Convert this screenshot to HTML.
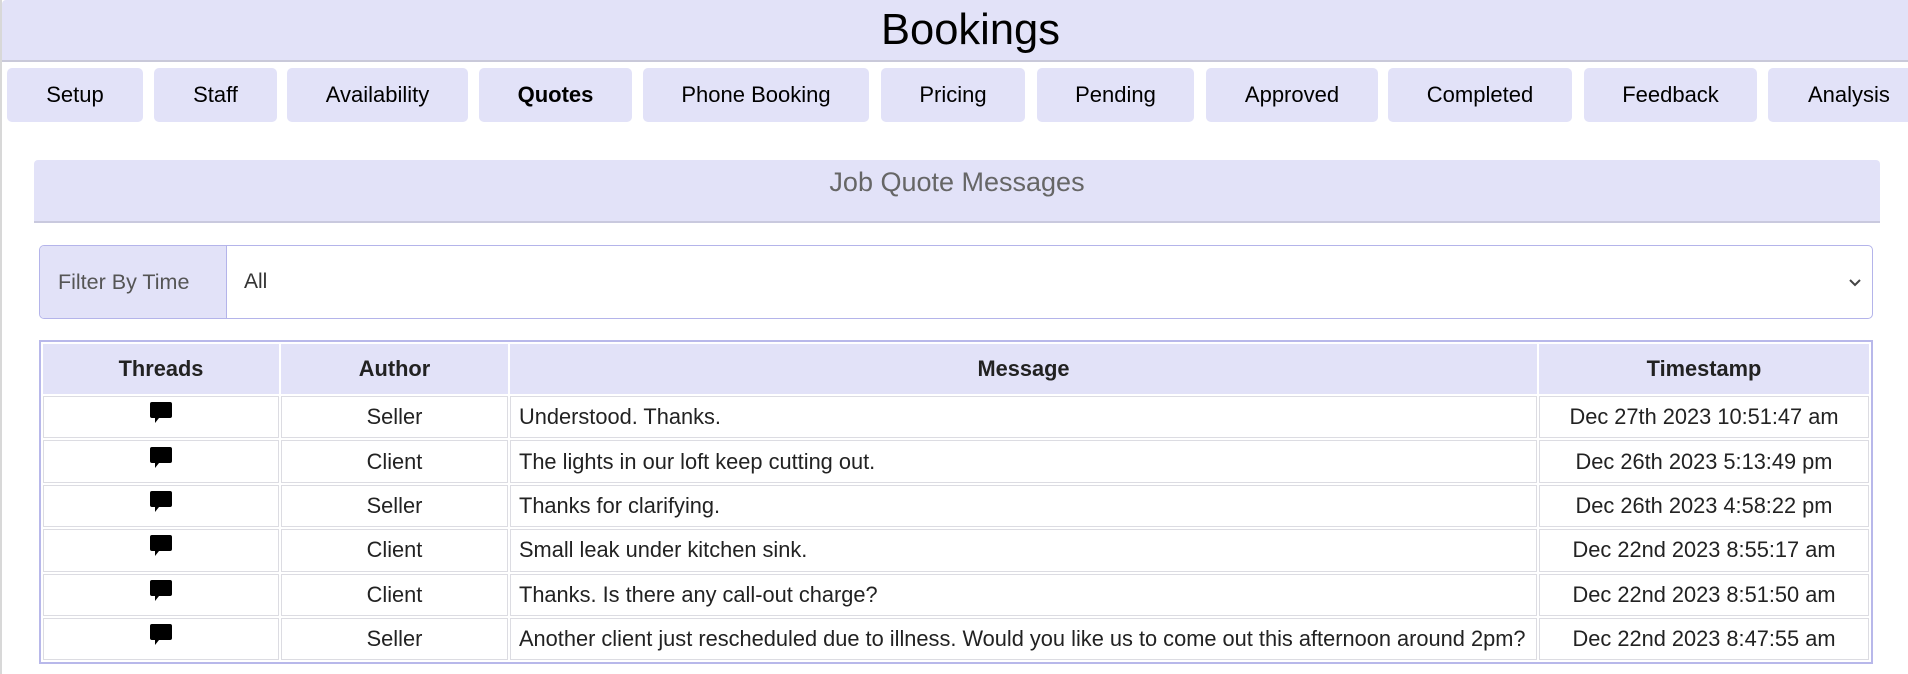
<!DOCTYPE html>
<html><head><meta charset="utf-8"><style>
*{box-sizing:border-box;margin:0;padding:0}
body{width:1908px;height:674px;overflow:hidden;background:#fff;font-family:"Liberation Sans",Arial,sans-serif;position:relative;color:#000}
.frame{position:absolute;left:0;top:0;width:2px;height:674px;background:#d8d8d8}
.hdr{position:absolute;left:2px;top:0;width:1906px;height:62px;background:#e2e2f8;border-bottom:2px solid #c9c9d9;border-top-left-radius:4px}
.hdr span{position:absolute;left:879px;top:4px;font-size:43.5px;line-height:52px;white-space:nowrap}
.tab{position:absolute;top:68px;height:54px;background:#e2e2f8;border-radius:5px;font-size:22px;line-height:54px;text-align:center;white-space:nowrap}
.title{position:absolute;left:34px;top:160px;width:1846px;height:63px;background:#e2e2f8;border-bottom:2px solid #c9c9de;border-radius:4px 4px 0 0;text-align:center;font-size:27px;line-height:44px;color:#666}
.flt{position:absolute;left:39px;top:245px;width:1834px;height:74px;border:1px solid #b4b4ea;border-radius:5px;overflow:hidden;background:#fff}
.flt .lab{position:absolute;left:0;top:0;width:187px;height:72px;background:#e2e2f8;border-right:1px solid #b4b4ea;font-size:21.5px;line-height:72px;padding-left:18px;color:#555}
.flt .val{position:absolute;left:204px;top:0;font-size:21px;line-height:72px;color:#333}
.flt svg{position:absolute;right:10px;top:32px}
table{position:absolute;left:39px;top:340px;width:1834px;border:2px solid #b8b8ea;border-spacing:2px;border-collapse:separate;font-size:21.8px}
th{background:#e2e2f8;height:50px;font-weight:bold;color:#222;border:none;padding:0}
td{height:42.4px;border:1px solid #dcdce2;text-align:center;color:#222;padding:0;box-sizing:border-box}
td.m{text-align:left;padding-left:8px}
td svg{display:block;margin:-8px auto 0}
</style></head><body>
<div class="frame"></div>
<div class="hdr"><span>Bookings</span></div>
<div class="tab" style="left:7px;width:136px">Setup</div>
<div class="tab" style="left:154px;width:123px">Staff</div>
<div class="tab" style="left:287px;width:181px">Availability</div>
<div class="tab" style="left:479px;width:153px;font-weight:bold">Quotes</div>
<div class="tab" style="left:643px;width:226px">Phone Booking</div>
<div class="tab" style="left:881px;width:144px">Pricing</div>
<div class="tab" style="left:1037px;width:157px">Pending</div>
<div class="tab" style="left:1206px;width:172px">Approved</div>
<div class="tab" style="left:1388px;width:184px">Completed</div>
<div class="tab" style="left:1584px;width:173px">Feedback</div>
<div class="tab" style="left:1768px;width:170px;text-align:left;padding-left:40px">Analysis</div>
<div class="title">Job Quote Messages</div>
<div class="flt"><div class="lab">Filter By Time</div><div class="val">All</div>
<svg width="14" height="10" viewBox="0 0 14 10"><path d="M2 2 L7 7 L12 2" fill="none" stroke="#444" stroke-width="2"/></svg></div>
<table>
<colgroup><col style="width:236px"><col style="width:227px"><col style="width:1027px"><col></colgroup>
<tr><th>Threads</th><th>Author</th><th>Message</th><th>Timestamp</th></tr>
<tr><td><svg width="24" height="22" viewBox="0 0 24 22"><path d="M3 0H21Q23 0 23 2V14Q23 16 21 16H10L6 21V16H3Q1 16 1 14V2Q1 0 3 0Z" fill="#000"/></svg></td><td>Seller</td><td class="m">Understood. Thanks.</td><td>Dec 27th 2023 10:51:47 am</td></tr>
<tr><td><svg width="24" height="22" viewBox="0 0 24 22"><path d="M3 0H21Q23 0 23 2V14Q23 16 21 16H10L6 21V16H3Q1 16 1 14V2Q1 0 3 0Z" fill="#000"/></svg></td><td>Client</td><td class="m">The lights in our loft keep cutting out.</td><td>Dec 26th 2023 5:13:49 pm</td></tr>
<tr><td><svg width="24" height="22" viewBox="0 0 24 22"><path d="M3 0H21Q23 0 23 2V14Q23 16 21 16H10L6 21V16H3Q1 16 1 14V2Q1 0 3 0Z" fill="#000"/></svg></td><td>Seller</td><td class="m">Thanks for clarifying.</td><td>Dec 26th 2023 4:58:22 pm</td></tr>
<tr><td><svg width="24" height="22" viewBox="0 0 24 22"><path d="M3 0H21Q23 0 23 2V14Q23 16 21 16H10L6 21V16H3Q1 16 1 14V2Q1 0 3 0Z" fill="#000"/></svg></td><td>Client</td><td class="m">Small leak under kitchen sink.</td><td>Dec 22nd 2023 8:55:17 am</td></tr>
<tr><td><svg width="24" height="22" viewBox="0 0 24 22"><path d="M3 0H21Q23 0 23 2V14Q23 16 21 16H10L6 21V16H3Q1 16 1 14V2Q1 0 3 0Z" fill="#000"/></svg></td><td>Client</td><td class="m">Thanks. Is there any call-out charge?</td><td>Dec 22nd 2023 8:51:50 am</td></tr>
<tr><td><svg width="24" height="22" viewBox="0 0 24 22"><path d="M3 0H21Q23 0 23 2V14Q23 16 21 16H10L6 21V16H3Q1 16 1 14V2Q1 0 3 0Z" fill="#000"/></svg></td><td>Seller</td><td class="m">Another client just rescheduled due to illness. Would you like us to come out this afternoon around 2pm?</td><td>Dec 22nd 2023 8:47:55 am</td></tr>
</table>
</body></html>
